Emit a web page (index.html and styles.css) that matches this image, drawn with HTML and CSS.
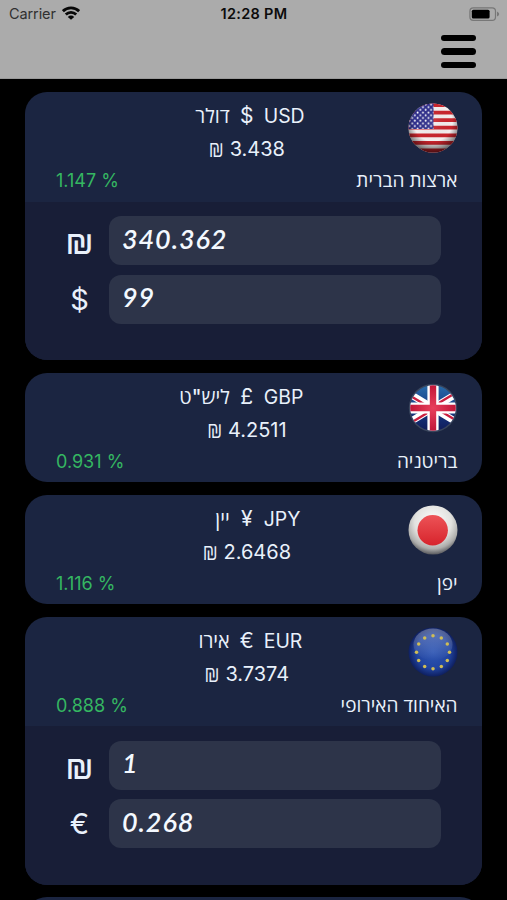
FILE: index.html
```html
<!DOCTYPE html>
<html lang="he">
<head>
<meta charset="utf-8">
<meta name="viewport" content="width=device-width, initial-scale=1">
<title>שערי מטבע</title>
<link rel="stylesheet" href="styles.css">
</head>
<body>
<header class="topbar">
  <div class="status">
    <div class="carrier"><span>Carrier</span>
      <svg class="wifi" viewBox="0 0 18 14" width="18" height="14"><g fill="none" stroke="#080808" stroke-width="2.8"><path d="M.9 5.2a11.5 11.5 0 0 1 16.2 0"/><path d="M3.8 8.5a7.4 7.4 0 0 1 10.4 0"/></g><path d="M9 13.8 5.8 10.9a4.6 4.6 0 0 1 6.4 0z" fill="#080808"/></svg>
    </div>
    <div class="clock">12:28 PM</div>
    <svg class="battery" viewBox="0 0 31 14" width="31" height="14"><rect x=".9" y=".9" width="25.6" height="12.4" rx="3.4" fill="none" stroke="#777" stroke-width="1.2"/><rect x="2.8" y="2.7" width="17.8" height="8.8" rx="1.6" fill="#000"/><path d="M28 4.6q2.2 1 2.2 2.5T28 9.6z" fill="#777"/></svg>
  </div>
  <div class="menu"><i></i><i></i><i></i></div>
</header>
<main class="list">
  <section class="card">
    <div class="summary">
      <div class="rates">
        <div class="title"><span class="name">דולר</span><span class="sign">$</span><span class="code">USD</span></div>
        <div class="rate"><span class="shekel">₪</span> 3.438</div>
      </div>
      <svg class="flag" viewBox="0 0 50 50">
        <defs>
          <clipPath id="disc"><circle cx="25" cy="25" r="24.5"/></clipPath>
          <radialGradient id="shade" cx=".5" cy=".38" r=".64"><stop offset="0" stop-color="#fff" stop-opacity=".1"/><stop offset=".6" stop-color="#000" stop-opacity="0"/><stop offset="1" stop-color="#000" stop-opacity=".7"/></radialGradient>
          <pattern id="stars" width="5.4" height="5.4" patternUnits="userSpaceOnUse"><circle cx="1.5" cy="1.5" r=".95" fill="#fff"/><circle cx="4.2" cy="4.2" r=".95" fill="#fff"/></pattern>
        </defs>
        <g clip-path="url(#disc)">
          <path fill="#f4eeee" d="M0 0h50v50H0z"/>
          <path fill="#c9252d" d="M0 0h50v4H0zM0 7.7h50v3.8H0zM0 15.2h50v3.8H0zM0 22.7h50v3.8H0zM0 30.4h50v3.8H0zM0 38h50v3.8H0zM0 45.6h50V50H0z"/>
          <path fill="#302f8c" d="M0 0h25.5v26H0z"/><path fill="url(#stars)" d="M0 0h25.5v26H0z"/>
          <path fill="url(#shade)" d="M0 0h50v50H0z"/>
        </g>
      </svg>
      <div class="details"><span class="change">1.147 %</span><span class="country">ארצות הברית</span></div>
    </div>
    <div class="converter">
      <span class="unit unit-shekel">₪</span><input class="amount" value="340.362">
      <span class="unit">$</span><input class="amount" value="99">
    </div>
  </section>

  <section class="card">
    <div class="summary">
      <div class="rates">
        <div class="title"><span class="name">ליש"ט</span><span class="sign">£</span><span class="code">GBP</span></div>
        <div class="rate"><span class="shekel">₪</span> 4.2511</div>
      </div>
      <svg class="flag" viewBox="0 0 50 50">
        <defs><linearGradient id="ukblue" x2="0" y2="1"><stop offset="0" stop-color="#2a70ad"/><stop offset=".5" stop-color="#173c86"/><stop offset="1" stop-color="#101955"/></linearGradient><radialGradient id="ukred"><stop offset="0" stop-color="#e8405c"/><stop offset="1" stop-color="#bd1235"/></radialGradient><clipPath id="ukdisc"><circle cx="25" cy="25" r="22.8"/></clipPath></defs>
        <circle cx="25" cy="25" r="24.2" fill="#39455c"/>
        <g clip-path="url(#ukdisc)">
          <path fill="url(#ukblue)" d="M0 0h50v50H0z"/>
          <path stroke="#fff" stroke-width="7" d="M-5 7 55 43M55 7-5 43"/>
          <path stroke="#c91f3f" stroke-width="2.4" d="M-5 8.5 25 26.5M25 23.5 55 41.5M55 5.5 25 23.5M25 26.5-5 44.5"/>
          <path fill="#fff" d="M19.4 0h11.2v50H19.4zM0 19.4h50v11.2H0z"/>
          <path fill="url(#ukred)" d="M21.8 0h6.4v21.8H50v6.4H28.2V50h-6.4V28.2H0v-6.4h21.8z"/>
        </g>
      </svg>
      <div class="details"><span class="change">0.931 %</span><span class="country">בריטניה</span></div>
    </div>
  </section>

  <section class="card">
    <div class="summary">
      <div class="rates">
        <div class="title"><span class="name">יין</span><span class="sign">¥</span><span class="code">JPY</span></div>
        <div class="rate"><span class="shekel">₪</span> 2.6468</div>
      </div>
      <svg class="flag" viewBox="0 0 50 50">
        <defs><radialGradient id="pearl" cx=".5" cy=".34" r=".68"><stop offset="0" stop-color="#fff"/><stop offset=".55" stop-color="#e2e2df"/><stop offset=".8" stop-color="#aeaeac"/><stop offset="1" stop-color="#4a4b50"/></radialGradient><linearGradient id="sun" x2="0" y2="1"><stop offset="0" stop-color="#ed5357"/><stop offset="1" stop-color="#d7242c"/></linearGradient></defs>
        <circle cx="25" cy="25" r="24.5" fill="url(#pearl)"/><circle cx="24.7" cy="25.3" r="15.2" fill="url(#sun)"/>
      </svg>
      <div class="details"><span class="change">1.116 %</span><span class="country">יפן</span></div>
    </div>
  </section>

  <section class="card">
    <div class="summary">
      <div class="rates">
        <div class="title"><span class="name">אירו</span><span class="sign">€</span><span class="code">EUR</span></div>
        <div class="rate"><span class="shekel">₪</span> 3.7374</div>
      </div>
      <svg class="flag" viewBox="0 0 50 50">
        <defs><radialGradient id="eublue" cx=".5" cy=".5" r=".52"><stop offset="0" stop-color="#2e56b4"/><stop offset=".65" stop-color="#2144a0"/><stop offset="1" stop-color="#0c1b58"/></radialGradient><linearGradient id="gloss" x2="0" y2="1"><stop offset="0" stop-color="#fff" stop-opacity=".3"/><stop offset="1" stop-color="#fff" stop-opacity="0"/></linearGradient>
          <circle id="star" r="1.75" fill="#d0bd55"/></defs>
        <circle cx="25" cy="25" r="24.5" fill="url(#eublue)"/><ellipse cx="25" cy="17.5" rx="19.5" ry="16" fill="url(#gloss)"/>
        <g><use href="#star" x="25" y="8.7"/><use href="#star" x="33.3" y="10.9"/><use href="#star" x="39.3" y="16.9"/><use href="#star" x="41.5" y="25.2"/><use href="#star" x="39.3" y="33.4"/><use href="#star" x="33.3" y="39.5"/><use href="#star" x="25" y="41.7"/><use href="#star" x="16.7" y="39.5"/><use href="#star" x="10.7" y="33.4"/><use href="#star" x="8.5" y="25.2"/><use href="#star" x="10.7" y="16.9"/><use href="#star" x="16.7" y="10.9"/></g>
      </svg>
      <div class="details"><span class="change">0.888 %</span><span class="country">האיחוד האירופי</span></div>
    </div>
    <div class="converter">
      <span class="unit unit-shekel">₪</span><input class="amount" value="1">
      <span class="unit">€</span><input class="amount" value="0.268">
    </div>
  </section>

  <section class="card card-next"></section>
</main>
</body>
</html>
```
FILE: styles.css
```css
* { box-sizing: border-box; }
body {
  margin: 0;
  height: 900px;
  overflow: hidden;
  background: #000;
  color: #e9f1fb;
  font-family: Inter, "Open Sans", "Liberation Sans", sans-serif;
}
.topbar { height: 79px; background: #ababab; color: #0c0c0c; border-bottom: 1px solid #999; }
.status {
  display: grid;
  grid-template-columns: 1fr auto 1fr;
  align-items: center;
  height: 27px;
  padding: 0 7px 0 9px;
  font-size: 14.5px;
}
.carrier { display: flex; align-items: center; gap: 6px; color: #303030; letter-spacing: -.1px; }
.wifi { margin-top: -2px; }
.clock { font-weight: 600; letter-spacing: .3px; margin-left: -1px; }
.battery { justify-self: end; }
.menu { display: flex; flex-direction: column; gap: 7px; width: 35px; margin: 8px 31.5px 0 auto; }
.menu i { height: 6.3px; border-radius: 4px; background: #000; }

.list {
  display: flex;
  flex-direction: column;
  gap: 12.5px;
  height: 821px;
  padding: 13px 25px 0;
  overflow: hidden;
}
.card { flex: none; border-radius: 22px; overflow: hidden; background: #1b2541; }
.card-next { height: 110px; }
.summary {
  display: grid;
  grid-template-columns: 1fr 50px;
  grid-template-rows: 66px 30px;
  height: 109.6px;
  padding: 8px 24.5px 0 26px;
}
.rates { padding-left: 35px; }
.title { display: grid; grid-template-columns: 1fr 34px 1fr; height: 32px; line-height: 32px; font-size: 19.4px; }
.name { font-weight: 500; font-size: 19.8px; direction: rtl; justify-self: end; }
.sign { text-align: center; font-size: 21px; }
.rate { height: 34px; line-height: 35px; font-size: 20px; text-align: center; }
.shekel { display: inline-block; font-weight: 300; transform: translateY(-1px) scaleY(1.25); }
.flag { width: 50px; height: 50px; margin-top: 2.5px; }
.details {
  grid-column: 1 / -1;
  display: flex;
  justify-content: space-between;
  padding-left: 5px;
  line-height: 30px;
  font-size: 18px;
}
.change { color: #35b761; }
.country { font-weight: 500; font-size: 19px; direction: rtl; }
.converter {
  display: grid;
  grid-template-columns: 58px 1fr;
  grid-auto-rows: 49px;
  row-gap: 9.5px;
  align-items: center;
  height: 158.5px;
  padding: 14.5px 41px 0 26px;
  background: #181e37;
}
.unit { text-align: center; font-size: 29px; line-height: 49px; padding-right: 1px; }
.unit-shekel { transform: scale(1.2, 1.25); }
.amount {
  width: 100%;
  height: 49px;
  border: 0;
  border-radius: 12px;
  padding: 0 13px 5px;
  background: #2d3449;
  color: #f4f9ff;
  font: italic 600 27px Lato, sans-serif;
  letter-spacing: .9px;
}
```
